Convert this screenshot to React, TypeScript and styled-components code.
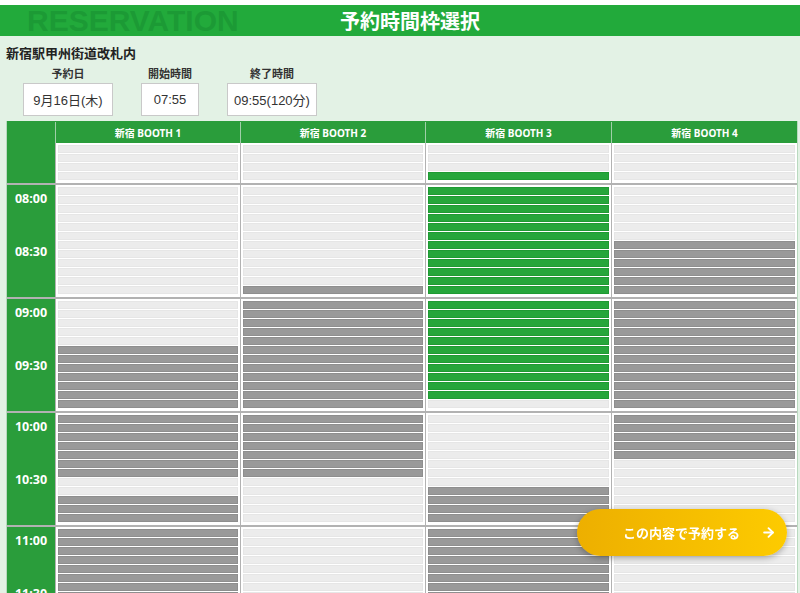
import React from "react"
import styled, { createGlobalStyle } from "styled-components"
import { ArrowRight } from "lucide-react"

// 予約枠の状態: "." 空き / "x" 予約済み / "g" 選択中
type Block = { labels: string[]; booths: string[] }

const booths = ["新宿 BOOTH 1", "新宿 BOOTH 2", "新宿 BOOTH 3", "新宿 BOOTH 4"]

const blocks: Block[] = [
  { labels: [], booths: ["....", "....", "...g", "...."] },
  {
    labels: ["08:00", "08:30"],
    booths: ["............", "...........x", "gggggggggggg", "......xxxxxx"]
  },
  {
    labels: ["09:00", "09:30"],
    booths: [".....xxxxxxx", "xxxxxxxxxxxx", "ggggggggggg.", "xxxxxxxxxxxx"]
  },
  {
    labels: ["10:00", "10:30"],
    booths: ["xxxxxxx..xxx", "xxxxxxx.....", "........xxxx", "xxxxx......."]
  },
  {
    labels: ["11:00", "11:30"],
    booths: ["xxxxxxxxxxxx", "............", "xxxxxxxxxxxx", "............"]
  }
]

const fields = [
  { label: "予約日", value: "9月16日(木)", width: 90 },
  { label: "開始時間", value: "07:55", width: 58 },
  { label: "終了時間", value: "09:55(120分)", width: 90 }
]

export default function App() {
  return (
    <>
      <GlobalStyle />
      <Page>
        <TitleBar>
          <Watermark>RESERVATION</Watermark>
          <Title>予約時間枠選択</Title>
        </TitleBar>
        <Info>
          <Place>新宿駅甲州街道改札内</Place>
          <Fields>
            {fields.map(field => (
              <Field key={field.label}>
                <FieldLabel>{field.label}</FieldLabel>
                <FieldBox width={field.width}>{field.value}</FieldBox>
              </Field>
            ))}
          </Fields>
        </Info>
        <Table>
          <HeaderRow>
            <HeaderCell />
            {booths.map(name => (
              <HeaderCell key={name}>{name}</HeaderCell>
            ))}
          </HeaderRow>
          <Body>
            {blocks.map((block, i) => (
              <BodyRow key={i}>
                <TimeCell>
                  {block.labels.map(label => (
                    <TimeLabel key={label}>{label}</TimeLabel>
                  ))}
                </TimeCell>
                {block.booths.map((slots, j) => (
                  <BoothCell key={j}>
                    {slots.split("").map((state, k) => (
                      <Slot key={k} state={state} />
                    ))}
                  </BoothCell>
                ))}
              </BodyRow>
            ))}
          </Body>
        </Table>
        <ReserveButton>
          <span>この内容で予約する</span>
          <ArrowRight size={15} strokeWidth={3} />
        </ReserveButton>
      </Page>
    </>
  )
}

const GlobalStyle = createGlobalStyle`
  html, body {
    margin: 0;
    padding: 0;
    background: #ffffff;
  }
  body {
    font-family: "Noto Sans", "Noto Sans CJK JP", sans-serif;
    color: #333;
  }
`

const Page = styled.div`
  margin-top: 5px;
  min-height: 100vh;
  background: #e3f2e5;
  padding-bottom: 40px;
`

const TitleBar = styled.header`
  position: relative;
  height: 31px;
  background: #22aa3b;
  display: flex;
  align-items: center;
  justify-content: center;
  overflow: hidden;
`

const Watermark = styled.div`
  position: absolute;
  left: 27px;
  top: 0;
  font-family: "Liberation Sans", Arial, sans-serif;
  font-weight: 700;
  font-size: 30px;
  line-height: 31px;
  color: #1c9a35;
`

const Title = styled.h1`
  position: relative;
  margin: 0 0 0 20px;
  font-family: "Noto Sans CJK JP", sans-serif;
  font-size: 20px;
  font-weight: 700;
  color: #ffffff;
  line-height: 31px;
`

const Info = styled.section`
  padding: 8px 6px 0;
`

const Place = styled.div`
  font-family: "Noto Sans CJK JP", sans-serif;
  font-size: 13px;
  font-weight: 700;
  line-height: 18px;
  color: #222;
`

const Fields = styled.div`
  display: flex;
  gap: 28px;
  padding-left: 17px;
  margin-top: 4px;
`

const Field = styled.div`
  display: flex;
  flex-direction: column;
  align-items: center;
  gap: 3px;
`

const FieldLabel = styled.div`
  font-family: "Noto Sans CJK JP", sans-serif;
  font-size: 11px;
  font-weight: 700;
  line-height: 14px;
  color: #333;
`

const FieldBox = styled.div<{ width: number }>`
  box-sizing: border-box;
  width: ${p => p.width}px;
  height: 33px;
  display: flex;
  align-items: center;
  justify-content: center;
  background: #ffffff;
  border: 1px solid #c9c9c9;
  font-family: "Liberation Sans", "Noto Sans CJK JP", sans-serif;
  font-size: 13px;
  color: #333;
  white-space: nowrap;
`

const Table = styled.div`
  margin: 5px 2px 0 6px;
  border: 1px solid #b9d9bf;
  border-top: none;
`

const columns = "48px 184px 184px 185px 1fr"

const HeaderRow = styled.div`
  display: grid;
  grid-template-columns: ${columns};
  gap: 1px;
  background: #9fcfa8;
  border-top: 1px solid #2a9d3b;
`

const HeaderCell = styled.div`
  height: 21px;
  display: flex;
  align-items: center;
  justify-content: center;
  background: #2a9d3b;
  color: #ffffff;
  font-family: "Noto Sans", "Noto Sans CJK JP", sans-serif;
  font-size: 10px;
  font-weight: 700;
`

const Body = styled.div`
  display: flex;
  flex-direction: column;
  gap: 2px;
  background: #b2b2b2;
`

const BodyRow = styled.div`
  display: grid;
  grid-template-columns: ${columns};
  gap: 1px;
`

const TimeCell = styled.div`
  background: #2a9d3b;
  padding-top: 6px;
  display: flex;
  flex-direction: column;
`

const TimeLabel = styled.div`
  height: 53px;
  line-height: 16px;
  text-align: center;
  color: #ffffff;
  font-family: "Noto Sans", sans-serif;
  font-size: 12.5px;
  font-weight: 700;
`

const BoothCell = styled.div`
  background: #ffffff;
  padding: 2px 2px 3px;
  display: flex;
  flex-direction: column;
  gap: 1px;
`

const slotColors: Record<string, { fill: string; edge: string }> = {
  ".": { fill: "#ececec", edge: "#e6e6e6" },
  x: { fill: "#999999", edge: "#8e8e8e" },
  g: { fill: "#26a63b", edge: "#1f9a33" }
}

const Slot = styled.div<{ state: string }>`
  box-sizing: border-box;
  height: 8px;
  background: ${p => slotColors[p.state].fill};
  border: 1px solid ${p => slotColors[p.state].edge};
`

const ReserveButton = styled.button`
  position: fixed;
  right: 13px;
  bottom: 37px;
  width: 210px;
  height: 47px;
  display: flex;
  align-items: center;
  justify-content: space-between;
  padding: 0 11px 0 46px;
  border: none;
  border-radius: 24px;
  background: linear-gradient(90deg, #edaf00 0%, #fdcb00 100%);
  box-shadow: 0 2px 6px rgba(0, 0, 0, 0.3);
  color: #ffffff;
  font-family: "Noto Sans CJK JP", sans-serif;
  font-size: 13px;
  font-weight: 700;
  cursor: pointer;
`
